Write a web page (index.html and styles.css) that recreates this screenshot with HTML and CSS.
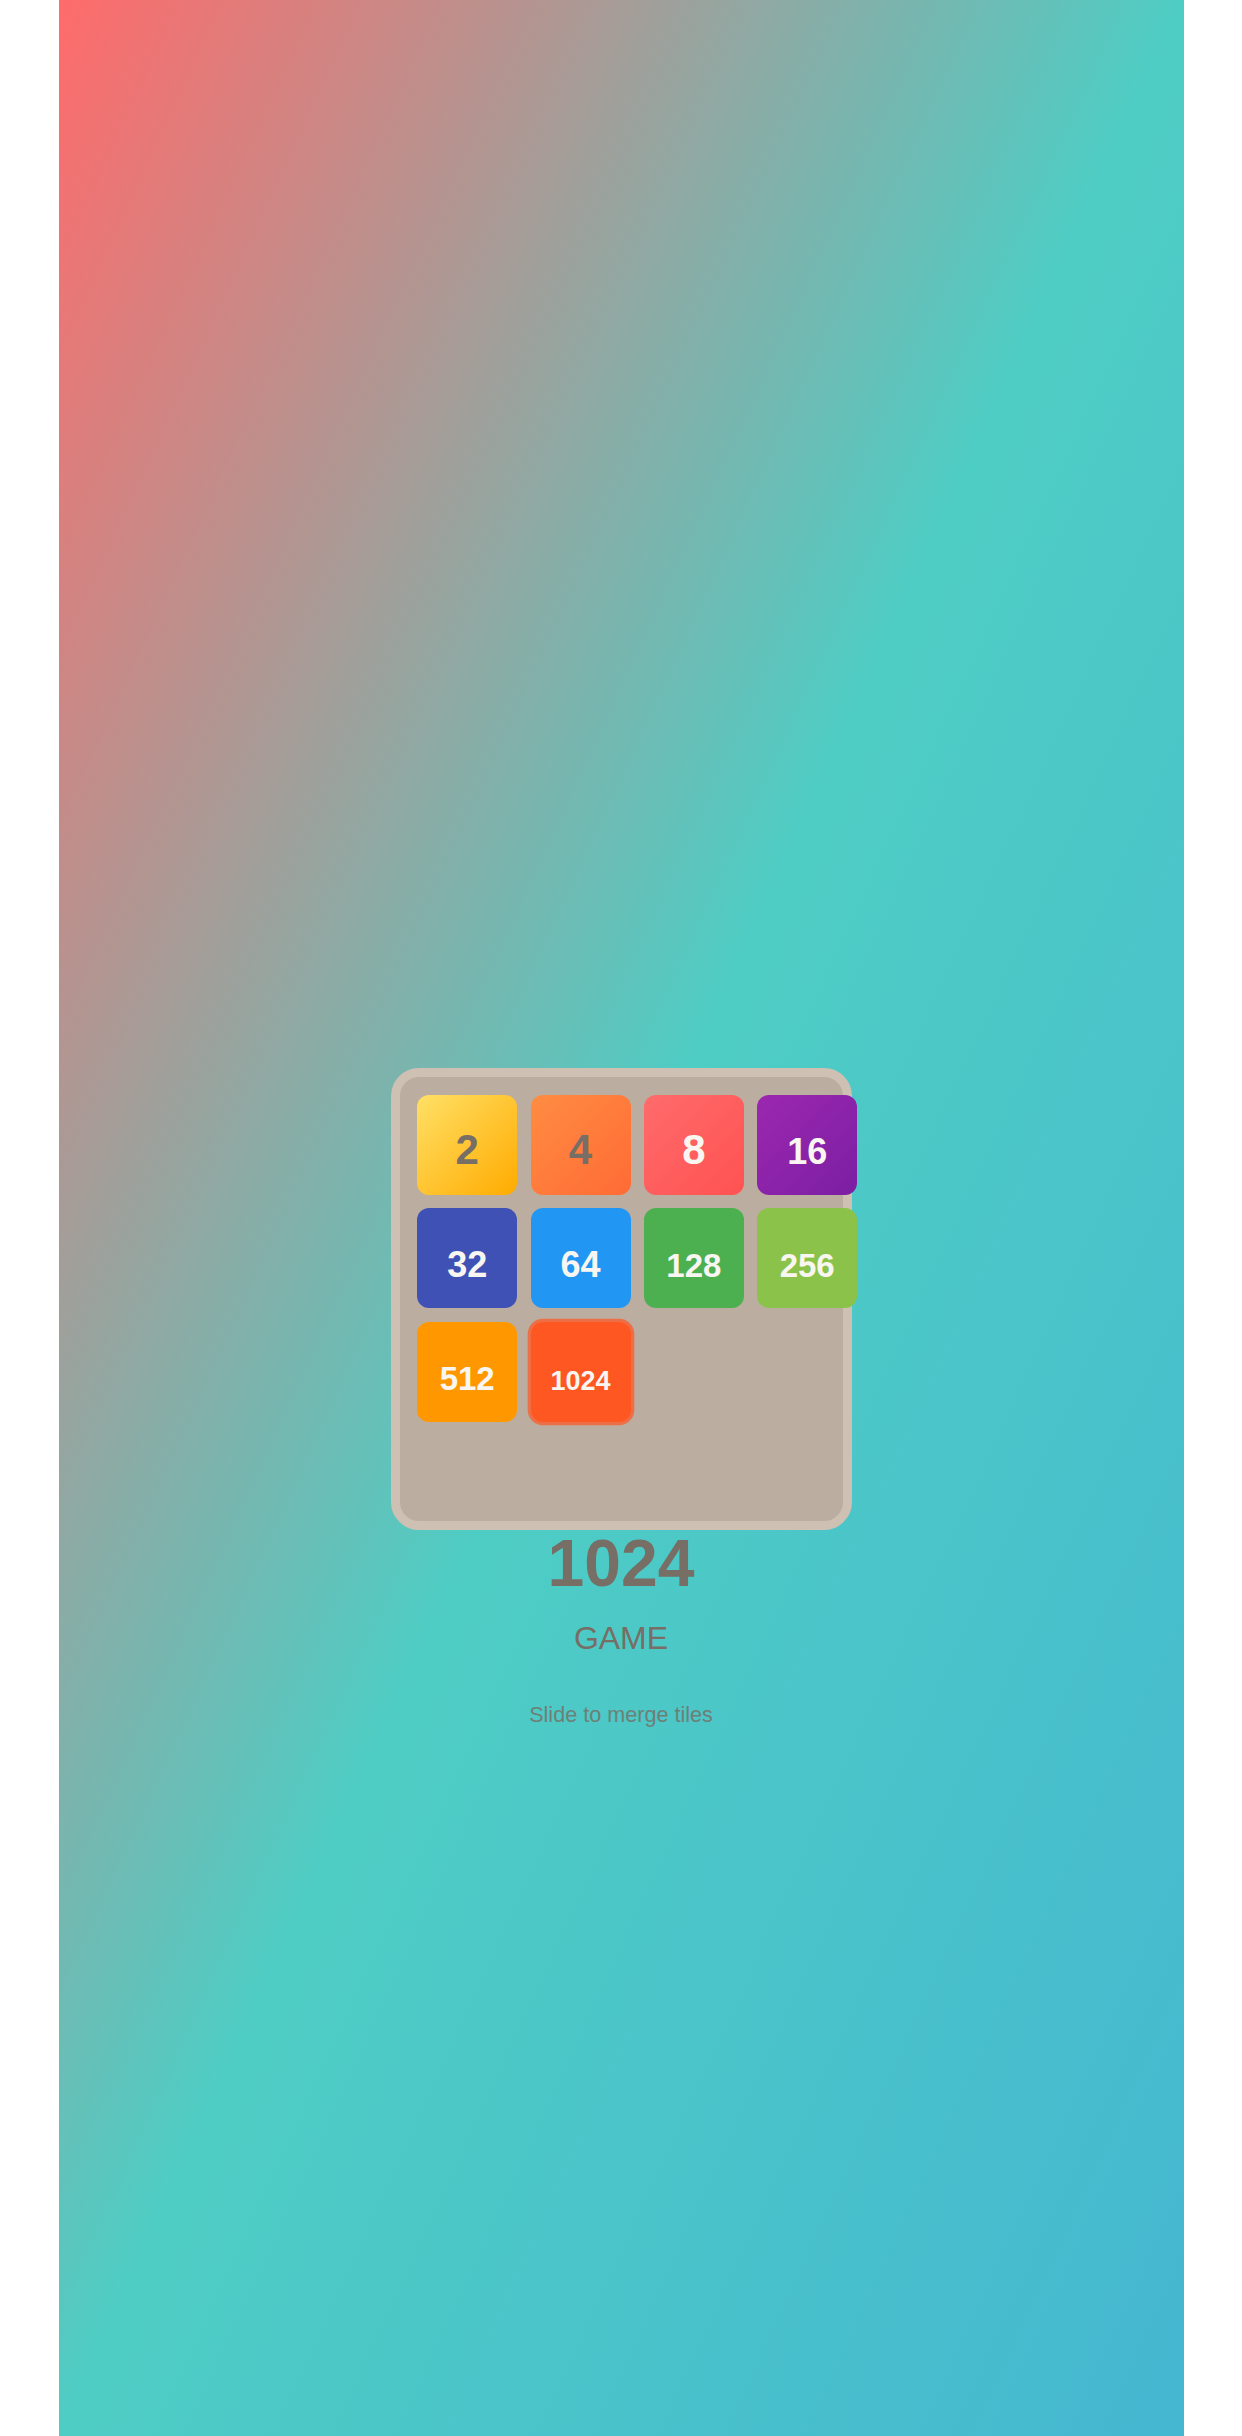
FILE: index.html
```html
<!DOCTYPE html>
<html lang="en">
<head>
<meta charset="utf-8">
<title>1024 Game</title>
<link rel="stylesheet" href="styles.css">
</head>
<body>
<main class="app">
  <div class="board">
    <div class="grid">
      <div class="tile t2"><span class="n1">2</span></div>
      <div class="tile t4"><span class="n1">4</span></div>
      <div class="tile t8"><span class="n1">8</span></div>
      <div class="tile t16"><span class="n2">16</span></div>
      <div class="tile t32"><span class="n2">32</span></div>
      <div class="tile t64"><span class="n2">64</span></div>
      <div class="tile t128"><span class="n3">128</span></div>
      <div class="tile t256"><span class="n3">256</span></div>
      <div class="tile t512"><span class="n3">512</span></div>
      <div class="tile t1024"><span class="n4">1024</span></div>
    </div>
  </div>
  <h1 class="title">1024</h1>
  <p class="subtitle">GAME</p>
  <p class="hint">Slide to merge tiles</p>
</main>
</body>
</html>
```

FILE: styles.css
```css
html, body {
  margin: 0;
  padding: 0;
  background: #ffffff;
}

body {
  font-family: "Liberation Sans", Arial, sans-serif;
}

.app {
  width: 1125px;
  min-height: 2436px;
  margin: 0 auto;
  box-sizing: border-box;
  padding-top: 1068px;
  display: flex;
  flex-direction: column;
  align-items: center;
  background: linear-gradient(to bottom right, #ff6b6b 0%, #4ecdc4 50%, #45b7d1 100%);
}

.board {
  width: 461px;
  height: 462px;
  box-sizing: border-box;
  border: 9px solid #cec0b3;
  border-radius: 28px;
  background: #bbada0;
  padding: 18px 0 0 17.7px;
}

.grid {
  display: grid;
  grid-template-columns: repeat(4, 100px);
  grid-auto-rows: 100px;
  gap: 13.33px;
}

.tile {
  box-sizing: border-box;
  border-radius: 12px;
  padding-top: 33.6px;
  font-size: 42px;
  line-height: 42px;
  font-weight: 700;
  text-align: center;
  color: #f9f6f2;
}

.tile span {
  line-height: 1;
}

.n1 { font-size: 42px; }
.n2 { font-size: 36px; }
.n3 { font-size: 33px; }
.n4 { font-size: 27px; }

.t2 { background: linear-gradient(135deg, #ffe066, #ffab00); color: #776e65; }
.t4 { background: linear-gradient(135deg, #ff8c42, #ff6b35); color: #776e65; }
.t8 { background: linear-gradient(135deg, #ff6b6b, #ff5252); }
.t16 { background: linear-gradient(135deg, #9c27b0, #7b1fa2); }
.t32 { background: #3f51b5; }
.t64 { background: #2196f3; }
.t128 { background: #4caf50; }
.t256 { background: #8bc34a; }
.t512 { background: #ff9800; }
.t1024 {
  background: #ff5722;
  box-shadow: 0 0 0 3.3px rgba(243, 104, 62, 0.9);
}

.title {
  margin: 0;
  font-size: 66px;
  line-height: 1;
  font-weight: 700;
  color: #776e65;
}

.subtitle {
  margin: 24px 0 0;
  font-size: 32px;
  font-weight: 400;
  color: #776e65;
}

.hint {
  margin: 45px 0 0;
  font-size: 21.6px;
  color: #776e65;
  opacity: 0.8;
}
```
